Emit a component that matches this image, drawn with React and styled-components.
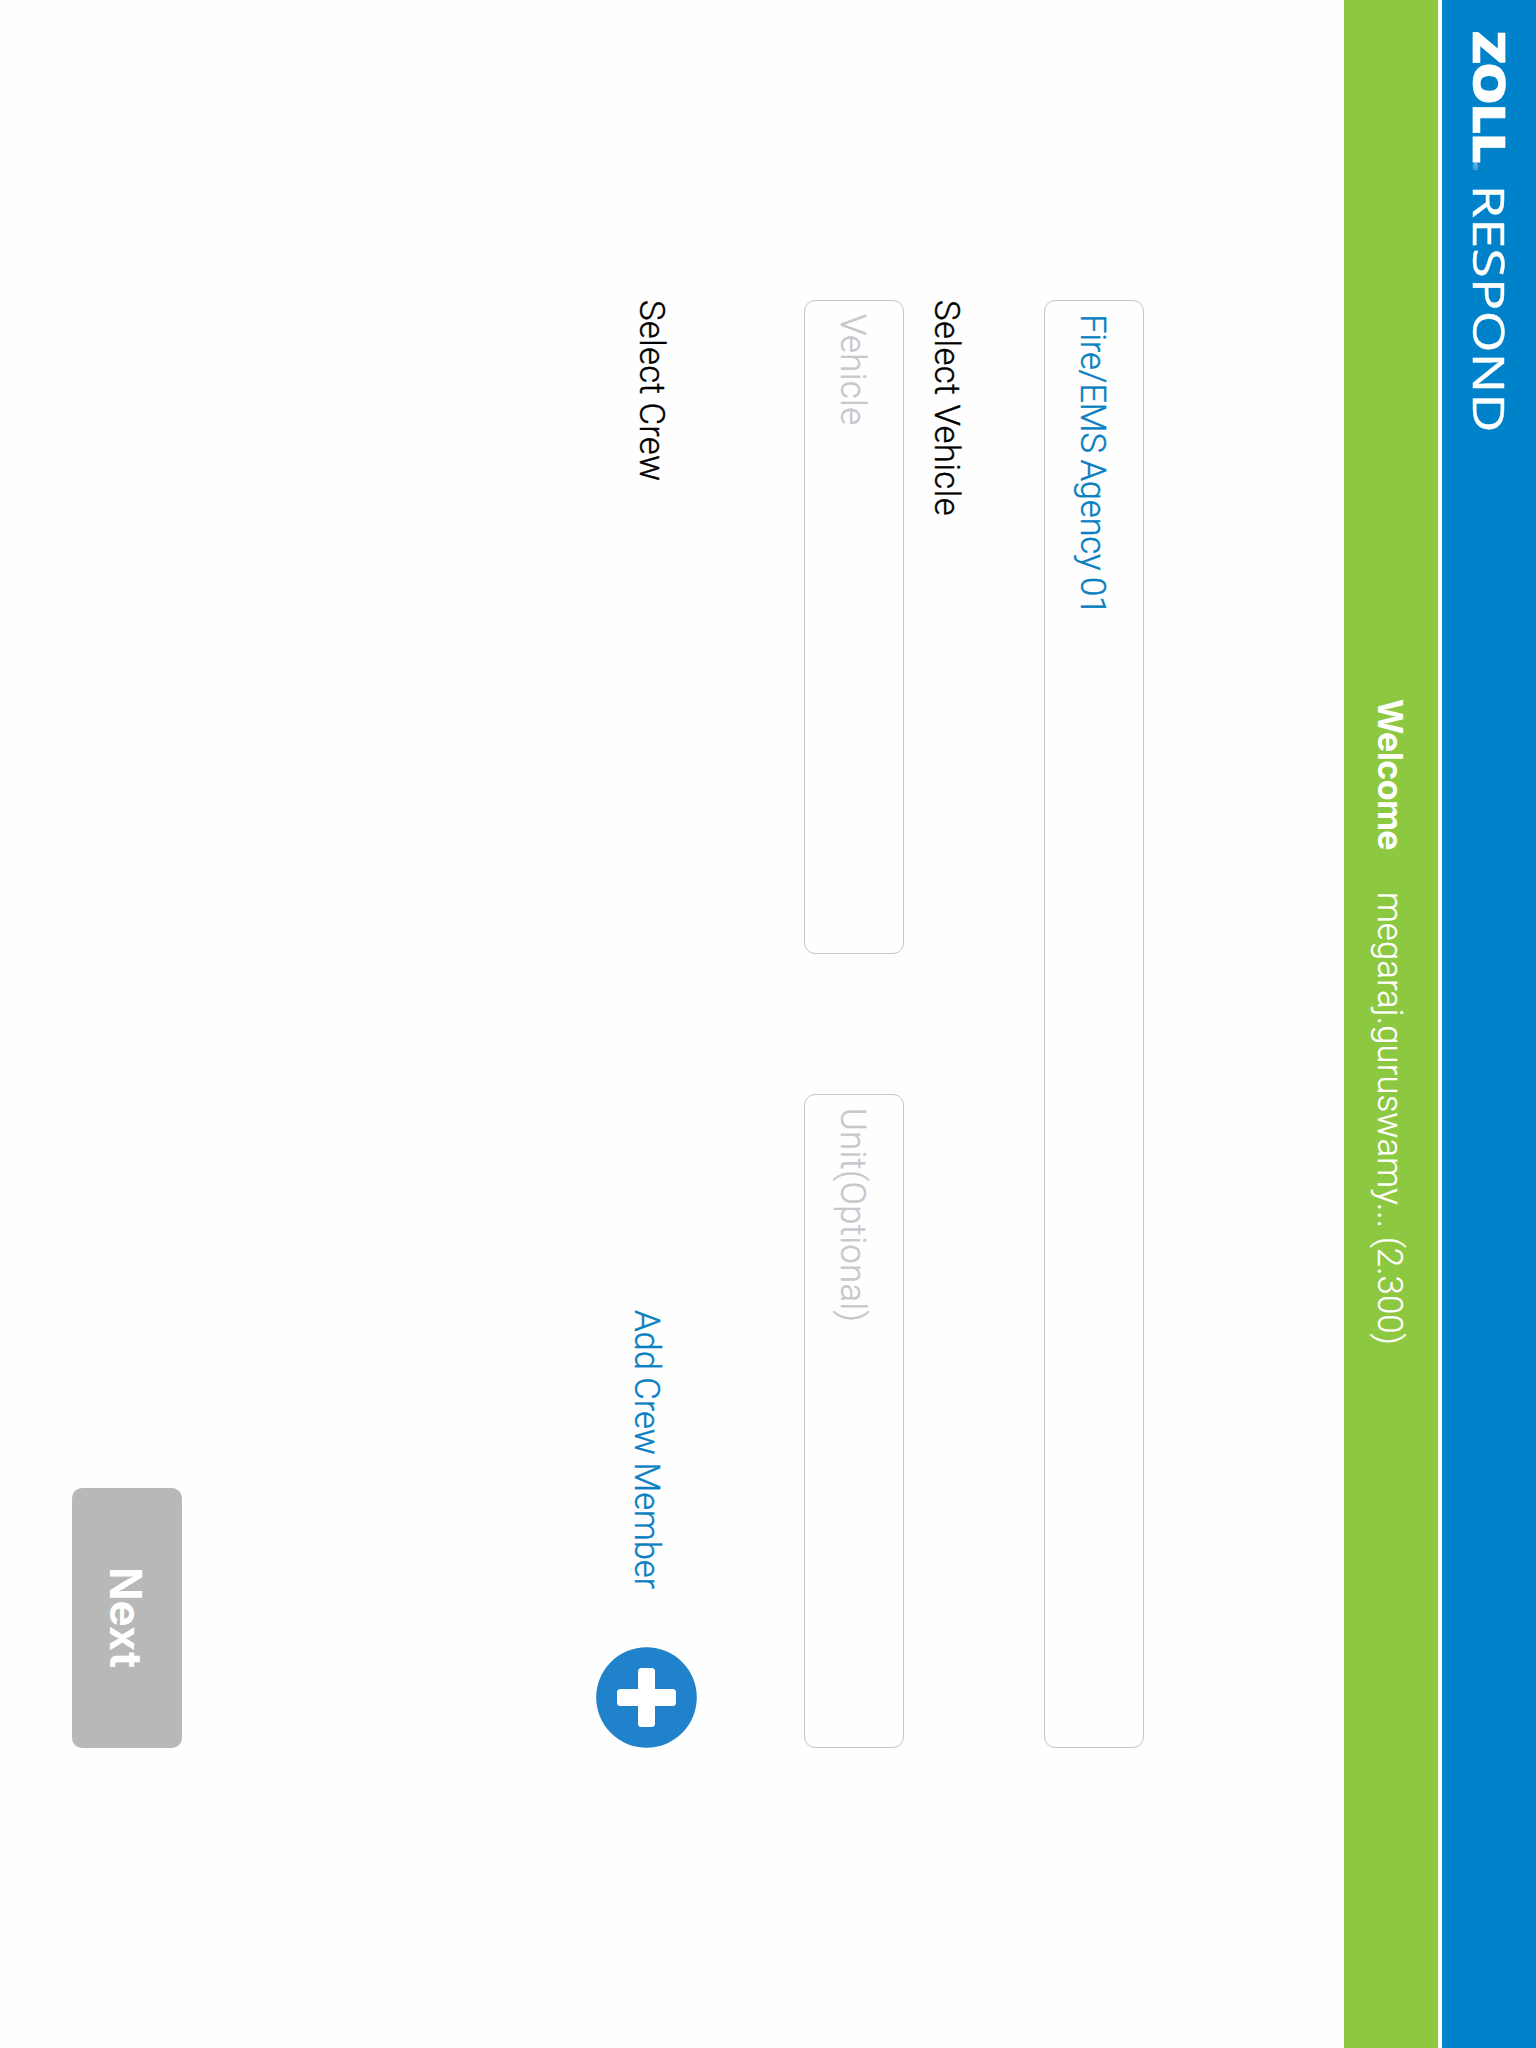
import React from "react";
import styled, { createGlobalStyle } from "styled-components";

const Global = createGlobalStyle`
  * { box-sizing: border-box; }
  html, body { margin: 0; padding: 0; background: #fefefe; }
`;

/* The console runs in landscape on a portrait-held tablet: lines run down, blocks stack leftwards. */
const Screen = styled.div`
  writing-mode: vertical-rl;
  width: 1536px;
  height: 2048px;
  display: flex;
  flex-direction: column;
  overflow: hidden;
  background: #fefefe;
  font-family: Roboto, Inter, sans-serif;
`;

const Header = styled.header`
  flex: none;
  block-size: 94px;
  display: flex;
  align-items: center;
  padding-inline-start: 31px;
  background: #0082ca;
  color: #fff;
  font-family: "Open Sans", "Noto Sans", sans-serif;
  white-space: nowrap;
`;

/* The wordmark is an extended cut, so its letters are stretched along the line. */
const Logo = styled.div`
  display: flex;
  align-items: center;
  margin-block-end: 2px;
  transform: scaleY(1.21);
  transform-origin: top center;
`;

const Brand = styled.span`
  font-size: 44.5px;
  line-height: 60px;
  font-weight: 800;
  letter-spacing: -1.5px;
  -webkit-text-stroke: 0.6px #fff;
`;

const Mark = styled.span`
  font-size: 7px;
  line-height: 8px;
  align-self: flex-end;
  margin-block-end: 11px;
  opacity: 0.7;
`;

const Product = styled.span`
  font-size: 44.5px;
  line-height: 60px;
  font-weight: 400;
  margin-inline-start: 9.5px;
  letter-spacing: 0.2px;
  -webkit-text-stroke: 0.4px #fff;
`;

const WelcomeBar = styled.div`
  flex: none;
  block-size: 94px;
  margin-block-start: 4px;
  display: flex;
  align-items: center;
  padding-block-start: 3px;
  padding-inline-start: 699px;
  gap: 42px;
  background: #8dc841;
  color: #fff;
  white-space: nowrap;
`;

const Text = styled.span`
  font-size: 34.7px;
  line-height: 44px;
  font-weight: 300;
  -webkit-text-stroke: ${(p) => p.$stroke ?? 0.4}px currentColor;
  letter-spacing: ${(p) => p.$track || 0}px;
  word-spacing: ${(p) => p.$word || 0}px;
  white-space: nowrap;
`;

const Greeting = styled.span`
  font-family: Inter, sans-serif;
  font-size: 34px;
  line-height: 44px;
  font-weight: 700;
  letter-spacing: -0.6px;
`;

const Form = styled.main`
  flex: 1;
  display: flex;
  flex-direction: column;
  padding-block: 200px 72px;
  padding-inline: 300px;
`;

const FieldRow = styled.div`
  display: flex;
  gap: 140px;
`;

const Field = styled.div`
  flex: 1;
  block-size: 100px;
  border: 1px solid #c6c6c8;
  border-radius: 11px;
  display: flex;
  align-items: center;
  padding-block-start: 2px;
  padding-inline-start: 13px;
  color: ${(p) => (p.$filled ? "#0a7fc2" : "#c7c7cc")};
`;

const SectionLabel = styled.div`
  block-size: 140px;
  display: flex;
  align-items: flex-end;
  padding-block-end: 21px;
  color: #000;
`;

const CrewRow = styled.div`
  display: flex;
  align-items: center;
  justify-content: space-between;
  margin-block-start: 107px;
  block-size: 101px;
`;

const CrewTitle = styled.div`
  color: #000;
  margin-block-end: 11px;
`;

const AddCrew = styled.div`
  display: flex;
  align-items: center;
  gap: 58px;
  color: #0a7fc2;
`;

const PlusIcon = styled.svg`
  display: block;
  width: 101px;
  height: 101px;
`;

const Footer = styled.footer`
  display: flex;
  justify-content: flex-end;
  margin-block-start: auto;
`;

const NextButton = styled.div`
  block-size: 110px;
  inline-size: 260px;
  border-radius: 10px;
  background: #b8b8b8;
  color: #fff;
  display: flex;
  align-items: center;
  justify-content: center;
  padding-block-start: 2px;
  font-family: Inter, sans-serif;
  font-size: 44px;
  line-height: 56px;
  font-weight: 700;
`;

export default function App() {
  return (
    <>
      <Global />
      <Screen>
        <Header>
          <Logo>
            <Brand>ZOLL</Brand>
            <Mark>®</Mark>
            <Product>RESPOND</Product>
          </Logo>
        </Header>
        <WelcomeBar>
          <Greeting>Welcome</Greeting>
          <Text $stroke={0.3} $track={0.1}>megaraj.guruswamy... (2.300)</Text>
        </WelcomeBar>
        <Form>
          <FieldRow>
            <Field $filled>
              <Text $track={-0.25} $word={-1.5}>Fire/EMS Agency 01</Text>
            </Field>
          </FieldRow>
          <SectionLabel>
            <Text $track={0.38}>Select Vehicle</Text>
          </SectionLabel>
          <FieldRow>
            <Field>
              <Text $track={0.35}>Vehicle</Text>
            </Field>
            <Field>
              <Text $track={0.3}>Unit(Optional)</Text>
            </Field>
          </FieldRow>
          <CrewRow>
            <CrewTitle>
              <Text $track={0.25} $word={-1}>Select Crew</Text>
            </CrewTitle>
            <AddCrew>
              <Text $track={-0.1} $word={-1}>Add Crew Member</Text>
              <PlusIcon viewBox="0 0 101 101">
                <circle cx="50.5" cy="50.5" r="50.3" fill="#2082ca" />
                <rect x="42" y="21" width="17" height="59" rx="3.5" fill="#fff" />
                <rect x="21" y="42" width="59" height="17" rx="3.5" fill="#fff" />
              </PlusIcon>
            </AddCrew>
          </CrewRow>
          <Footer>
            <NextButton>Next</NextButton>
          </Footer>
        </Form>
      </Screen>
    </>
  );
}
